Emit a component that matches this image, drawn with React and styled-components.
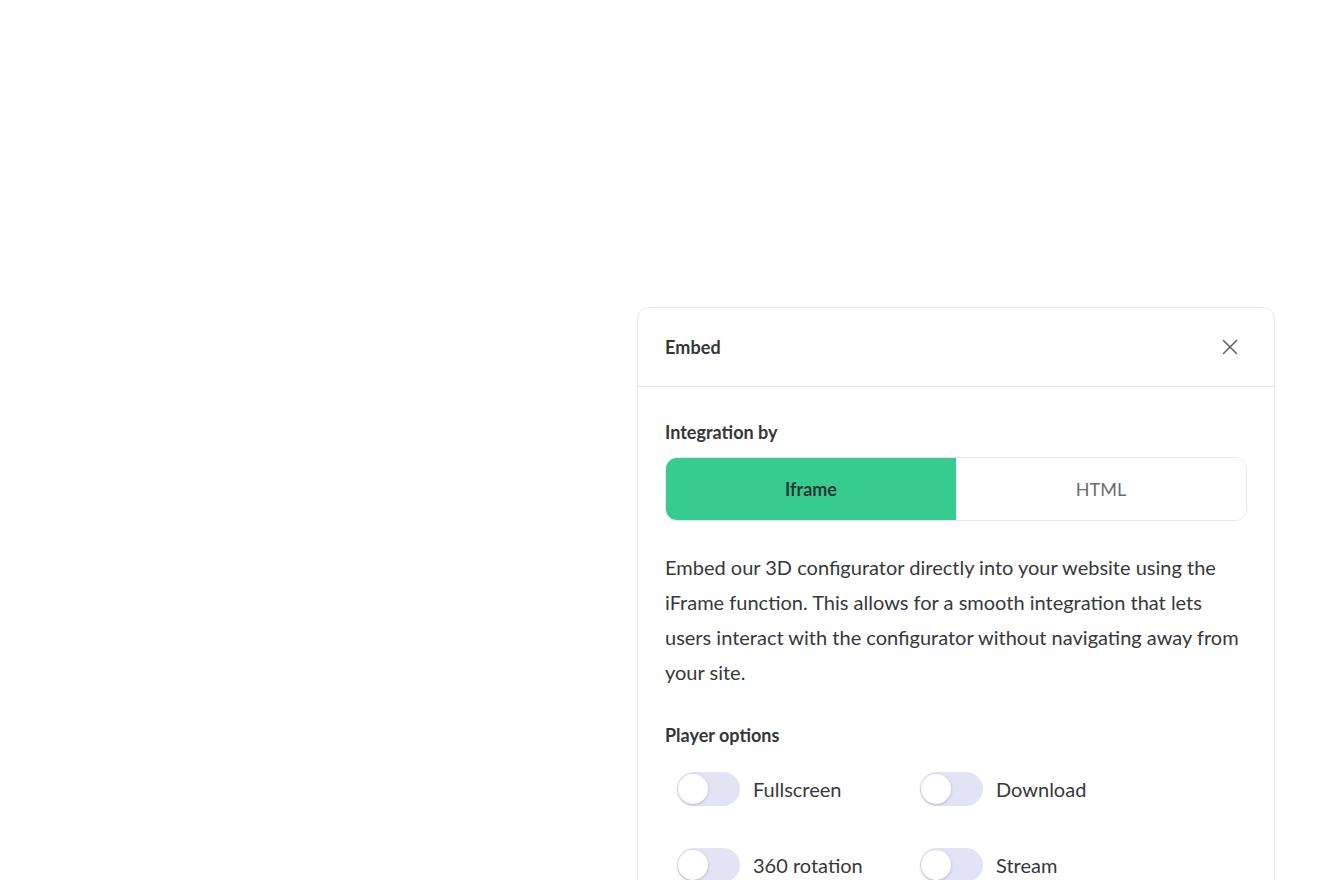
import React, { useState } from "react";
import styled, { createGlobalStyle } from "styled-components";

const Global = createGlobalStyle`
  html, body { margin: 0; padding: 0; background: #ffffff; }
  body { font-family: "Lato", "Noto Sans", sans-serif; color: #2f3033; }
  * { box-sizing: border-box; }
`;

const Page = styled.div`
  width: 1340px;
  height: 880px;
  overflow: hidden;
  display: flex;
  justify-content: flex-end;
  align-items: flex-start;
  padding: 307px 65px 0 0;
`;

const Panel = styled.section`
  width: 638px;
  border: 1px solid #e6e6ee;
  border-radius: 12px;
  background: #fff;
  display: flex;
  flex-direction: column;
  min-height: 700px;
`;

const Header = styled.header`
  height: 79px;
  display: flex;
  align-items: center;
  justify-content: space-between;
  padding: 0 32px 0 27px;
  border-bottom: 1px solid #e4e4f0;
`;

const Title = styled.h2`
  margin: 0;
  font-size: 18px;
  font-weight: 700;
  color: #35363a;
  letter-spacing: 0.1px;
`;

const CloseButton = styled.button`
  border: none;
  background: transparent;
  padding: 0;
  width: 24px;
  height: 24px;
  display: flex;
  align-items: center;
  justify-content: center;
  color: #5d5f64;
  cursor: pointer;
`;

const Body = styled.div`
  padding: 34px 27px 0 27px;
  display: flex;
  flex-direction: column;
`;

const Label = styled.h3`
  margin: 0 0 14px 0;
  font-size: 18px;
  font-weight: 700;
  color: #35363a;
  line-height: 22px;
`;

const Segmented = styled.div`
  display: grid;
  grid-template-columns: 1fr 1fr;
  height: 64px;
  border: 1px solid #e6e6ef;
  border-radius: 12px;
  overflow: hidden;
`;

const Segment = styled.button`
  border: none;
  margin: 0;
  font-family: inherit;
  font-size: 18px;
  background: ${(p) => (p.$active ? "#38cb8f" : "#ffffff")};
  color: ${(p) => (p.$active ? "#2b3a33" : "#6a6c70")};
  font-weight: ${(p) => (p.$active ? 700 : 400)};
  cursor: pointer;
`;

const Description = styled.p`
  margin: 29px 0 0 0;
  font-size: 20px;
  line-height: 35px;
  color: #37383b;
  font-weight: 400;
`;

const OptionsLabel = styled(Label)`
  margin: 34px 0 26px 0;
`;

const OptionsGrid = styled.div`
  display: grid;
  grid-template-columns: 243px 243px;
  row-gap: 42px;
  padding-left: 12px;
`;

const Option = styled.label`
  display: flex;
  align-items: center;
  gap: 13px;
  font-size: 20px;
  color: #37383b;
  cursor: pointer;
`;

const Track = styled.span`
  position: relative;
  width: 63px;
  height: 34px;
  border-radius: 17px;
  background: ${(p) => (p.$on ? "#38cb8f" : "#e3e3f6")};
  flex-shrink: 0;
`;

const Knob = styled.span`
  position: absolute;
  top: 2px;
  left: ${(p) => (p.$on ? "31px" : "1px")};
  width: 30px;
  height: 30px;
  border-radius: 50%;
  background: #fff;
  box-shadow: 0 1px 3px rgba(60, 60, 90, 0.28);
`;

function Toggle({ label }) {
  const [on, setOn] = useState(false);
  return (
    <Option onClick={() => setOn(!on)}>
      <Track $on={on}>
        <Knob $on={on} />
      </Track>
      {label}
    </Option>
  );
}

export default function App() {
  const [mode, setMode] = useState("iframe");
  return (
    <>
      <Global />
      <Page>
        <Panel>
          <Header>
            <Title>Embed</Title>
            <CloseButton aria-label="Close">
              <svg width="16" height="16" viewBox="0 0 16 16" fill="none" stroke="currentColor" strokeWidth="1.5" strokeLinecap="round">
                <path d="M1.5 1.5 L14.5 14.5 M14.5 1.5 L1.5 14.5" />
              </svg>
            </CloseButton>
          </Header>
          <Body>
            <Label>Integration by</Label>
            <Segmented>
              <Segment $active={mode === "iframe"} onClick={() => setMode("iframe")}>Iframe</Segment>
              <Segment $active={mode === "html"} onClick={() => setMode("html")}>HTML</Segment>
            </Segmented>
            <Description>
              Embed our 3D configurator directly into your website using the iFrame function. This allows for a smooth integration that lets users interact with the configurator without navigating away from your site.
            </Description>
            <OptionsLabel>Player options</OptionsLabel>
            <OptionsGrid>
              <Toggle label="Fullscreen" />
              <Toggle label="Download" />
              <Toggle label="360 rotation" />
              <Toggle label="Stream" />
            </OptionsGrid>
          </Body>
        </Panel>
      </Page>
    </>
  );
}
